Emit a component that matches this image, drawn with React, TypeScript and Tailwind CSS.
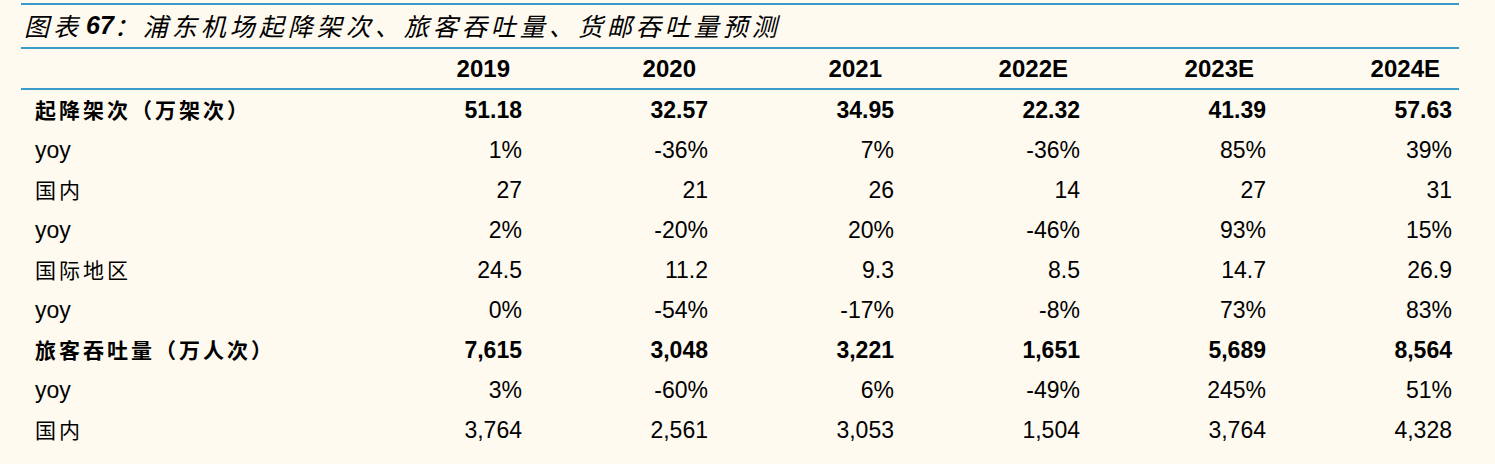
const YEARS = ["2019", "2020", "2021", "2022E", "2023E", "2024E"];

type Row = { label: string; values: string[]; bold?: boolean; cjk?: boolean };

const ROWS: Row[] = [
  { label: "起降架次（万架次）", values: ["51.18", "32.57", "34.95", "22.32", "41.39", "57.63"], bold: true, cjk: true },
  { label: "yoy", values: ["1%", "-36%", "7%", "-36%", "85%", "39%"] },
  { label: "国内", values: ["27", "21", "26", "14", "27", "31"], cjk: true },
  { label: "yoy", values: ["2%", "-20%", "20%", "-46%", "93%", "15%"] },
  { label: "国际地区", values: ["24.5", "11.2", "9.3", "8.5", "14.7", "26.9"], cjk: true },
  { label: "yoy", values: ["0%", "-54%", "-17%", "-8%", "73%", "83%"] },
  { label: "旅客吞吐量（万人次）", values: ["7,615", "3,048", "3,221", "1,651", "5,689", "8,564"], bold: true, cjk: true },
  { label: "yoy", values: ["3%", "-60%", "6%", "-49%", "245%", "51%"] },
  { label: "国内", values: ["3,764", "2,561", "3,053", "1,504", "3,764", "4,328"], cjk: true },
];

export default function App() {
  return (
    <div className="h-[464px] w-[1495px] overflow-hidden bg-[#fefaf0] pt-[3px] text-black font-['Liberation_Sans','Noto_Sans_CJK_SC',sans-serif]">
      <div className="ml-[21px] w-[1438px]">
        {/* Title */}
        <div className="flex h-[44px] items-center border-t-2 border-[#3a9bcb] pl-[3px] text-[25px] italic tracking-[4px]">
          <span className="font-['Noto_Sans_CJK_SC',sans-serif]">图表</span>
          <span className="ml-[4px] font-bold tracking-normal">67</span>
          <span className="font-['Noto_Sans_CJK_SC',sans-serif]">：浦东机场起降架次、旅客吞吐量、货邮吞吐量预测</span>
        </div>

        {/* Header */}
        <div className="grid h-[43px] grid-cols-[322px_repeat(6,186px)] items-center border-y-2 border-[#3a9bcb] text-[24px] font-bold">
          <div />
          {YEARS.map((y) => (
            <div key={y} className="pr-[19px] text-right">
              {y}
            </div>
          ))}
        </div>

        {/* Body */}
        {ROWS.map((row, i) => (
          <div
            key={i}
            className={`grid h-[40px] grid-cols-[322px_repeat(6,186px)] items-center text-[23px] ${row.bold ? "font-bold" : ""}`}
          >
            <div
              className={
                row.cjk
                  ? "pl-[14px] text-[21px] tracking-[3px] font-['Noto_Sans_CJK_SC',sans-serif]"
                  : "pl-[14px]"
              }
            >
              {row.label}
            </div>
            {row.values.map((v, j) => (
              <div key={j} className="pr-[7px] text-right">
                {v}
              </div>
            ))}
          </div>
        ))}
      </div>
    </div>
  );
}
